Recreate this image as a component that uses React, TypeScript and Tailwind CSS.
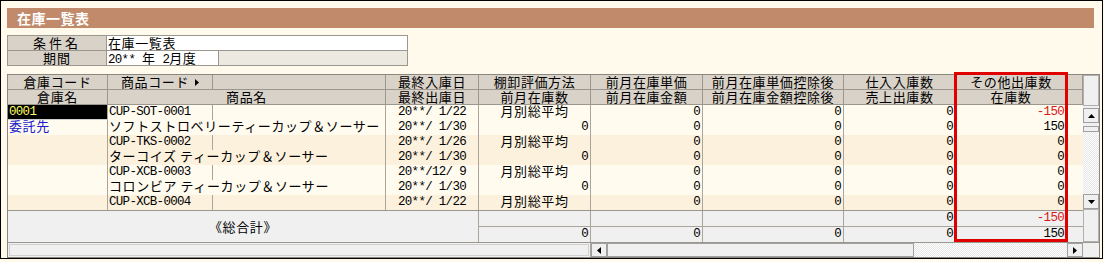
import React from 'react';

type StockRow = {
  warehouse?: string;
  warehouseStyle?: 'selected' | 'link';
  code?: string;
  name?: string;
  date: string;
  method: string;
  unit: string;
  net: string;
  inbound: string;
  other: string;
  negative?: boolean;
};

const rows: StockRow[] = [
  { warehouse: '0001', warehouseStyle: 'selected', code: 'CUP-SOT-0001', date: '20**/ 1/22', method: '月別総平均', unit: '0', net: '0', inbound: '0', other: '-150', negative: true },
  { warehouse: '委託先', warehouseStyle: 'link', name: 'ソフトストロベリーティーカップ＆ソーサー', date: '20**/ 1/30', method: '0', unit: '0', net: '0', inbound: '0', other: '150' },
  { code: 'CUP-TKS-0002', date: '20**/ 1/26', method: '月別総平均', unit: '0', net: '0', inbound: '0', other: '0' },
  { name: 'ターコイズ ティーカップ＆ソーサー', date: '20**/ 1/30', method: '0', unit: '0', net: '0', inbound: '0', other: '0' },
  { code: 'CUP-XCB-0003', date: '20**/12/ 9', method: '月別総平均', unit: '0', net: '0', inbound: '0', other: '0' },
  { name: 'コロンビア ティーカップ＆ソーサー', date: '20**/ 1/30', method: '0', unit: '0', net: '0', inbound: '0', other: '0' },
  { code: 'CUP-XCB-0004', date: '20**/ 1/22', method: '月別総平均', unit: '0', net: '0', inbound: '0', other: '0' },
];

const mono = "font-['Liberation_Mono',monospace] text-[12.5px] tracking-[-0.7px] leading-[15px]";
const hcell = 'shrink-0 border-r border-[#9c978e] text-center whitespace-nowrap overflow-hidden leading-[14px]';
const dcell = 'shrink-0 border-r border-[#aaa49a] whitespace-nowrap overflow-hidden';
// Japanese text sits a little low in its line box, so it gets a tighter line
const jp = 'leading-[11px]';
const num = `${mono} text-right pr-[2px]`;

const Tri: React.FC<{ dir: 'up' | 'down' | 'left' | 'right' }> = ({ dir }) => {
  const pts = {
    up: '0,4 3.5,0 7,4',
    down: '0,0 7,0 3.5,4',
    left: '4,0 4,7 0,3.5',
    right: '0,0 0,7 4,3.5',
  }[dir];
  const vertical = dir === 'up' || dir === 'down';
  return (
    <svg width={vertical ? 7 : 4} height={vertical ? 4 : 7} viewBox={vertical ? '0 0 7 4' : '0 0 4 7'}>
      <polygon points={pts} fill="#000" />
    </svg>
  );
};

const ScrollButton: React.FC<{ dir: 'up' | 'down' | 'left' | 'right'; className?: string }> = ({ dir, className }) => (
  <div className={`flex items-center justify-center bg-[#f0f0f0] border border-[#a0a0a0] ${className ?? ''}`}>
    <Tri dir={dir} />
  </div>
);

const track = 'bg-[repeating-conic-gradient(#ffffff_0%_25%,#e6e6e6_0%_50%)] bg-[length:2px_2px]';

export default function App() {
  return (
    <div className="w-[1104px] h-[262px] bg-[#fffaeb] text-black font-['Noto_Sans_CJK_JP',sans-serif] text-[13px] leading-[14px] tracking-[0.6px]">
      <div className="w-[1103px] h-[259px] border border-black bg-[#fffaeb]">
        {/* title bar */}
        <div className="ml-[6px] mt-[7px] w-[1087px] h-[20px] bg-[#c08a6b] flex items-center pl-[10px]">
          <span className="text-white font-bold text-[14px] tracking-[0.5px]">在庫一覧表</span>
        </div>

        {/* search conditions */}
        <div className="ml-[6px] mt-[7px] w-[401px] border border-[#9c978e]">
          <div className="flex h-[15px] border-b border-[#9c978e]">
            <div className="w-[99px] border-r border-[#9c978e] bg-[#d8d2c8] text-center tracking-[3px]">条件名</div>
            <div className="w-[300px] bg-white pl-[1px]">在庫一覧表</div>
          </div>
          <div className="flex h-[14px]">
            <div className="w-[99px] border-r border-[#9c978e] bg-[#d8d2c8] text-center tracking-[1px]">期間</div>
            <div className="w-[112px] border-r border-[#9c978e] bg-white pl-[1px] whitespace-pre leading-[13px]">
              <span className={mono}>{'20** '}</span>
              <span>年</span>
              <span className={mono}>{' 2'}</span>
              <span>月度</span>
            </div>
            <div className="w-[188px] bg-[#ece9e0]" />
          </div>
        </div>

        {/* stock grid */}
        <div className="relative ml-[6px] mt-[8px] w-[1093px] border border-[#8c877e]">
          <div className="flex">
            <div className="w-[1075px]">
              {/* header */}
              <div className="flex h-[15px] border-b border-[#9c978e] bg-[#d8d2c8]">
                <div className={`${hcell} w-[100px]`}>倉庫コード</div>
                <div className={`${hcell} w-[105px] flex items-center justify-center gap-[6px]`}>
                  <span>商品コード</span>
                  <Tri dir="right" />
                </div>
                <div className={`${hcell} w-[173px]`} />
                <div className={`${hcell} w-[93px]`}>最終入庫日</div>
                <div className={`${hcell} w-[112px]`}>棚卸評価方法</div>
                <div className={`${hcell} w-[112px]`}>前月在庫単価</div>
                <div className={`${hcell} w-[141px]`}>前月在庫単価控除後</div>
                <div className={`${hcell} w-[112px]`}>仕入入庫数</div>
                <div className={`${hcell} w-[111px]`}>その他出庫数</div>
                <div className={`${hcell} w-[16px]`} />
              </div>
              <div className="flex h-[15px] border-b border-[#9c978e] bg-[#d8d2c8]">
                <div className={`${hcell} w-[100px]`}>倉庫名</div>
                <div className={`${hcell} w-[278px]`}>商品名</div>
                <div className={`${hcell} w-[93px]`}>最終出庫日</div>
                <div className={`${hcell} w-[112px]`}>前月在庫数</div>
                <div className={`${hcell} w-[112px]`}>前月在庫金額</div>
                <div className={`${hcell} w-[141px]`}>前月在庫金額控除後</div>
                <div className={`${hcell} w-[112px]`}>売上出庫数</div>
                <div className={`${hcell} w-[111px]`}>在庫数</div>
                <div className={`${hcell} w-[16px]`} />
              </div>

              {/* body */}
              {rows.map((r, i) => {
                const shade = Math.floor(i / 2) % 2 === 0 ? 'bg-[#fffbef]' : 'bg-[#fcf1dd]';
                const methodIsText = r.method !== '0';
                return (
                  <div key={i} className={`flex h-[15px] ${shade}`}>
                    <div
                      className={`${dcell} w-[100px] pl-[1px] ${
                        r.warehouseStyle === 'selected'
                          ? `bg-black text-[#ffff66] border-b border-b-[#d0d0d0] ${mono}`
                          : r.warehouseStyle === 'link'
                          ? `text-[#1a1ac8] ${jp}`
                          : ''
                      }`}
                    >
                      {r.warehouse}
                    </div>
                    {r.code ? (
                      <>
                        <div className={`${dcell} w-[105px] pl-[1px] ${mono}`}>{r.code}</div>
                        <div className={`${dcell} w-[173px]`} />
                      </>
                    ) : (
                      <div className={`${dcell} w-[278px] pl-[1px] ${jp}`}>{r.name}</div>
                    )}
                    <div className={`${dcell} w-[93px] text-center whitespace-pre ${mono}`}>{r.date}</div>
                    <div className={`${dcell} w-[112px] ${methodIsText ? `text-center ${jp}` : num}`}>{r.method}</div>
                    <div className={`${dcell} w-[112px] ${num}`}>{r.unit}</div>
                    <div className={`${dcell} w-[141px] ${num}`}>{r.net}</div>
                    <div className={`${dcell} w-[112px] ${num}`}>{r.inbound}</div>
                    <div className={`${dcell} w-[111px] ${num} ${r.negative ? 'text-[#d81818]' : ''}`}>{r.other}</div>
                    <div className="w-[16px] shrink-0" />
                  </div>
                );
              })}

              {/* grand total */}
              <div className="flex border-t border-[#9c978e] bg-[#f0f0f0]">
                <div className="w-[471px] h-[31px] shrink-0 border-r border-[#aaa49a] flex items-center justify-center">
                  《総合計》
                </div>
                <div className="flex flex-col">
                  <div className="flex h-[16px] border-b border-[#aaa49a]">
                    <div className={`${dcell} w-[112px]`} />
                    <div className={`${dcell} w-[112px]`} />
                    <div className={`${dcell} w-[141px]`} />
                    <div className={`${dcell} w-[112px] ${num}`}>0</div>
                    <div className={`${dcell} w-[111px] ${num} text-[#d81818]`}>-150</div>
                    <div className="w-[16px]" />
                  </div>
                  <div className="flex h-[15px]">
                    <div className={`${dcell} w-[112px] ${num}`}>0</div>
                    <div className={`${dcell} w-[112px] ${num}`}>0</div>
                    <div className={`${dcell} w-[141px] ${num}`}>0</div>
                    <div className={`${dcell} w-[112px] ${num}`}>0</div>
                    <div className={`${dcell} w-[111px] ${num}`}>150</div>
                    <div className="w-[16px]" />
                  </div>
                </div>
              </div>
            </div>

            {/* vertical scrollbar */}
            <div className="w-[16px] flex flex-col bg-[#f0f0f0]">
              <div className="h-[31px] border border-[#b0b0b0] bg-[#f0f0f0]" />
              <div className="h-[20px] flex items-end pb-[3px]">
                <ScrollButton dir="up" className="w-[16px] h-[15px]" />
              </div>
              <div className="h-[6px] border border-[#a0a0a0] bg-[#f0f0f0]" />
              <div className={`h-[62px] ${track}`} />
              <ScrollButton dir="down" className="w-[16px] h-[15px]" />
              <div className="h-[33px] border border-[#b0b0b0] bg-[#f0f0f0]" />
            </div>
          </div>

          {/* horizontal scrollbar */}
          <div className="flex h-[15px] border-t border-[#9c978e]">
            <div className="w-[583px] shrink-0 border-r border-[#aaa49a] bg-[#f0f0f0] p-[1px]">
              <div className="h-full border border-[#d0d0d0] bg-[#f0f0f0]" />
            </div>
            <ScrollButton dir="left" className="w-[16px] h-[14px] shrink-0" />
            <div className="w-[307px] shrink-0 h-[14px] border border-[#a0a0a0] bg-[#f0f0f0]" />
            <div className={`w-[153px] shrink-0 h-[14px] ${track}`} />
            <ScrollButton dir="right" className="w-[16px] h-[14px] shrink-0" />
            <div className="w-[16px] shrink-0 bg-[#f0f0f0]" />
          </div>

          {/* highlight around the stock quantity column */}
          <div className="pointer-events-none absolute left-[946px] top-[-3px] w-[114px] h-[170px] border-[3px] border-[#e00000]" />
        </div>
      </div>
    </div>
  );
}
